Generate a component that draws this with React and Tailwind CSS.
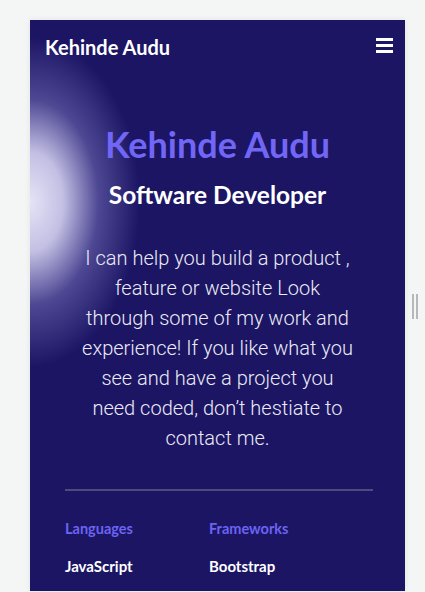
import React from 'react';

function Hamburger() {
  return (
    <div className="flex flex-col gap-[3px] w-[17px] mt-[1px]">
      <span className="block h-[3px] w-full bg-white" />
      <span className="block h-[3px] w-full bg-white" />
      <span className="block h-[3px] w-full bg-white" />
    </div>
  );
}

function Stack({ title, items }) {
  return (
    <div className="flex flex-col gap-[23px]">
      <h4 className="text-[14.5px] leading-none font-bold text-[#6c63f2]">{title}</h4>
      {items.map((it) => (
        <span key={it} className="text-[15px] leading-none font-bold text-white">{it}</span>
      ))}
    </div>
  );
}

export default function App() {
  return (
    <div className="w-[425px] h-[592px] bg-[#f4f5f5] flex pt-[20px] overflow-hidden" style={{ fontFamily: 'Lato, "Noto Sans", sans-serif' }}>
      <div className="w-[30px] shrink-0" />
      <div className="w-[375px] h-[571px] shrink-0 flex flex-col bg-[#1b1564] bg-[radial-gradient(ellipse_110px_165px_at_0px_182px,rgba(236,234,252,0.97)_0%,rgba(218,215,245,0.88)_30%,rgba(130,124,196,0.5)_62%,transparent_100%)] shadow-[0_0_6px_rgba(0,0,0,0.08)]">
        <nav className="flex justify-between items-start pl-[15px] pr-[12px] pt-[17px]">
          <span className="text-[20px] leading-none font-bold text-white">Kehinde Audu</span>
          <Hamburger />
        </nav>

        <section className="flex flex-col items-center pt-[69px]">
          <h1 className="text-[36px] leading-none font-bold text-[#7166f5]">Kehinde Audu</h1>
          <h2 className="mt-[21px] text-[24.5px] leading-none font-bold text-white">Software Developer</h2>
          <p
            className="mt-[35px] w-[275px] text-center text-[20px] leading-[30px] font-light text-[#ecebf5]"
            style={{ fontFamily: 'Roboto, "Noto Sans", sans-serif' }}
          >
            I can help you build a product , feature or website Look through some of my work and experience! If you like what you see and have a project you need coded, don’t hestiate to contact me.
          </p>
        </section>

        <div className="ml-[35px] mr-[32px] mt-[36px] h-[2px] bg-[#4d4b7c]" />

        <div className="grid grid-cols-[144px_1fr] px-[35px] pt-[31px]">
          <Stack title="Languages" items={['JavaScript']} />
          <Stack title="Frameworks" items={['Bootstrap']} />
        </div>
      </div>
      <div className="flex-1 flex items-center pl-[7px]">
        <div className="flex gap-[2px]">
          <span className="block w-[2px] h-[25px] bg-[#b5b7ba]" />
          <span className="block w-[2px] h-[25px] bg-[#b5b7ba]" />
        </div>
      </div>
    </div>
  );
}
